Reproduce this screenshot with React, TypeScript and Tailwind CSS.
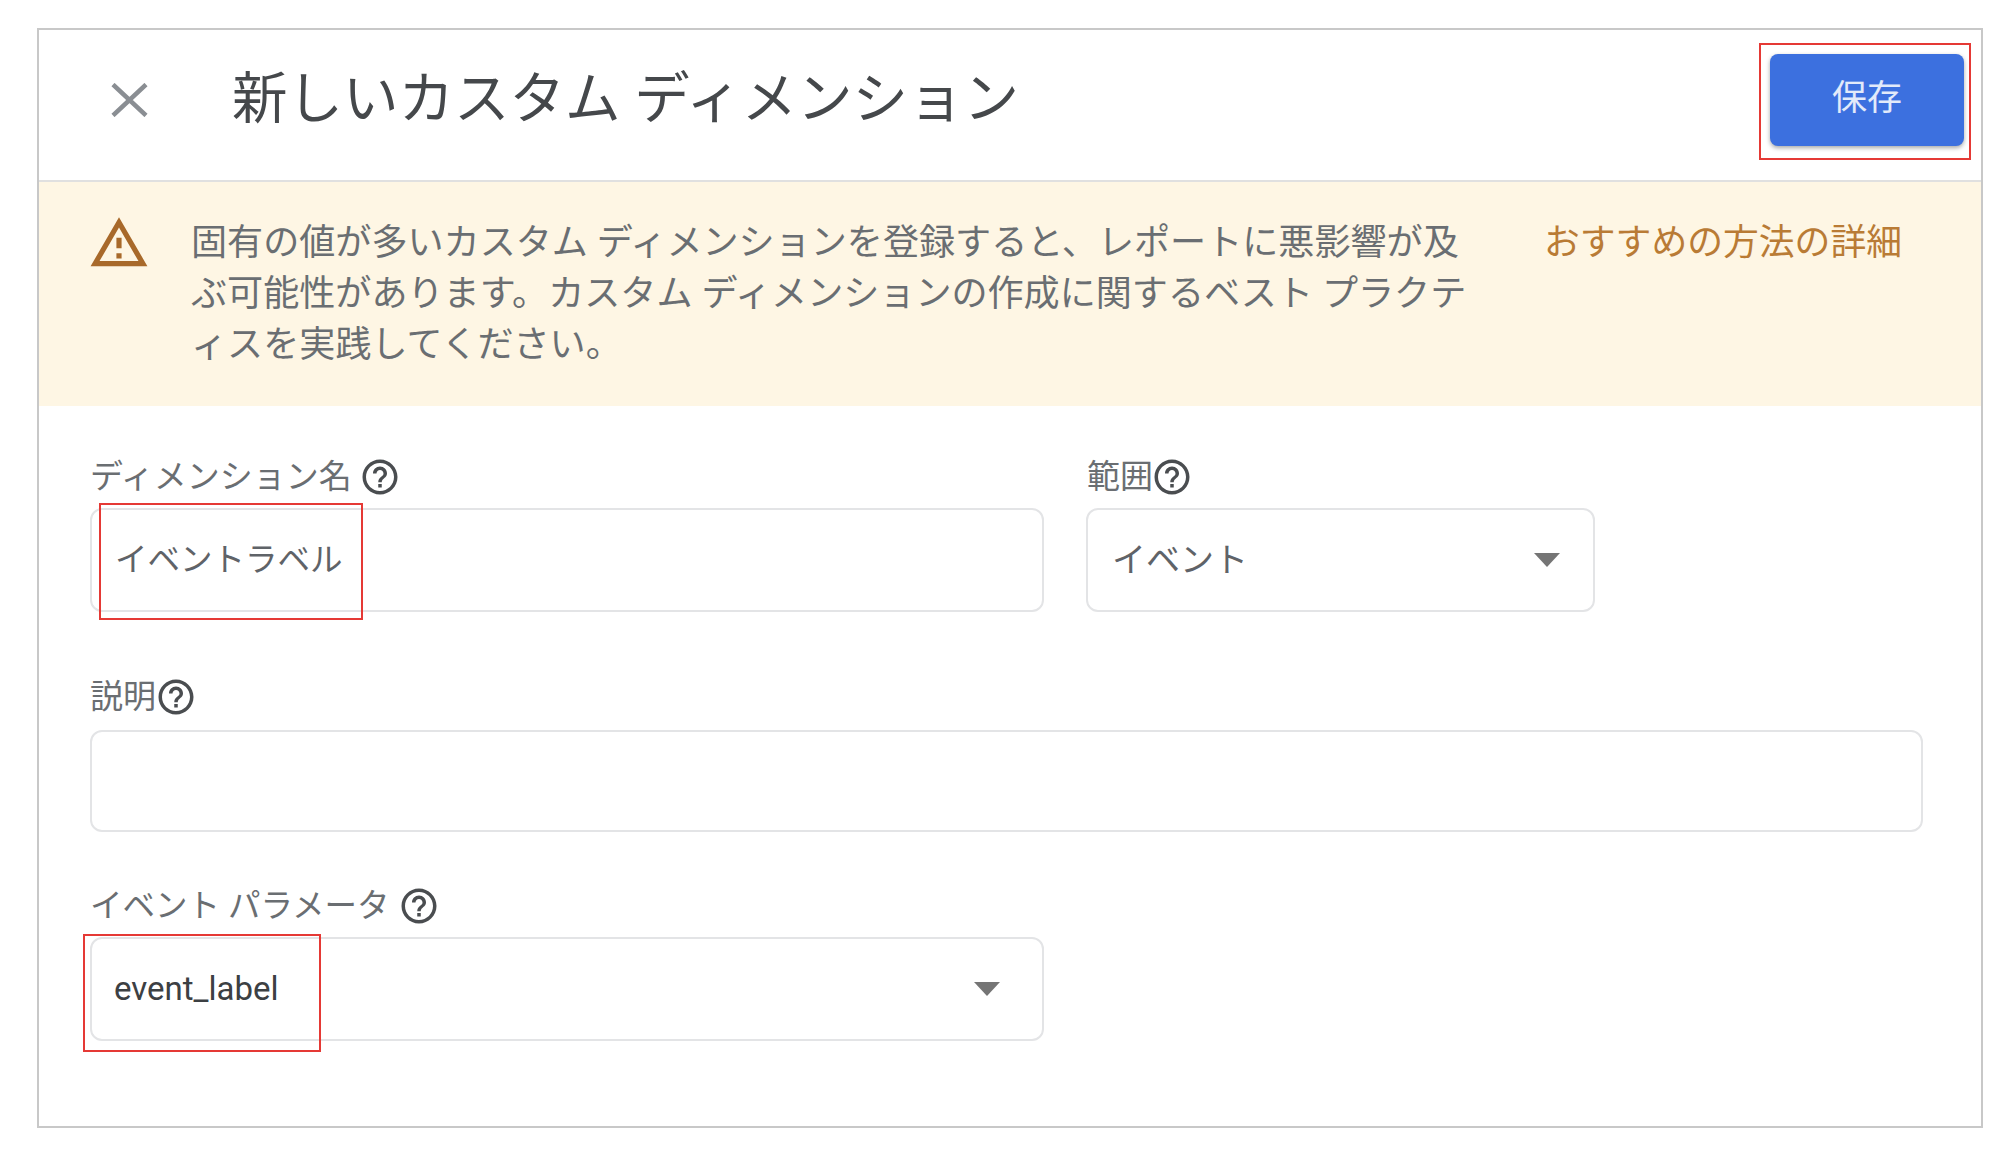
const FONT = "font-['Roboto','Noto_Sans_CJK_JP',sans-serif]"

function HelpIcon({ className = "" }: { className?: string }) {
  return (
    <svg viewBox="0 0 24 24" className={`h-[42px] w-[42px] shrink-0 fill-[#4a4d50] ${className}`}>
      <path d="M11 18h2v-2h-2v2zm1-16C6.48 2 2 6.48 2 12s4.48 10 10 10 10-4.48 10-10S17.52 2 12 2zm0 18c-4.41 0-8-3.59-8-8s3.59-8 8-8 8 3.59 8 8-3.59 8-8 8zm0-14c-2.21 0-4 1.79-4 4h2c0-1.1.9-2 2-2s2 .9 2 2c0 2-3 1.75-3 5h2c0-2.25 3-2.5 3-5 0-2.21-1.79-4-4-4z" />
    </svg>
  )
}

function Caret() {
  return (
    <svg viewBox="0 0 26 14" className="h-[14px] w-[26px] shrink-0 fill-[#757575]">
      <path d="M0 0h26L13 14z" />
    </svg>
  )
}

function Label({ text, iconClass, size = "text-[33px]" }: { text: string; iconClass: string; size?: string }) {
  return (
    <div className={`flex h-10 items-center leading-10 whitespace-nowrap text-[#6a6e72] ${size}`}>
      <span>{text}</span>
      <HelpIcon className={iconClass} />
    </div>
  )
}

export default function App() {
  return (
    <div className={`h-[1170px] w-[2014px] overflow-hidden bg-white pl-[37px] pt-[28px] ${FONT}`}>
      <div className="h-[1100px] w-[1946px] border-2 border-[#c8c8c8]">
        {/* Header */}
        <div className="flex h-[152px] items-center border-b-2 border-[#e0e0e0] pl-[72px] pr-[17px]">
          <svg viewBox="0 0 37 34" className="mt-[-10px] h-[34px] w-[37px] shrink-0 stroke-[#8a8e93] stroke-[4.5]" fill="none">
            <path d="M2 1.5L35 32.5M35 1.5L2 32.5" />
          </svg>
          <h1 className="ml-[84px] mt-[-11px] text-[55.5px] font-normal leading-[64px] whitespace-nowrap text-[#45484b]">
            新しいカスタム ディメンション
          </h1>
          <div className="relative ml-auto mt-[-11px]">
            <button className="block h-[92px] w-[194px] rounded-[8px] bg-[#3c70df] text-[35px] text-white/85 shadow-[0_2px_4px_rgba(60,64,67,0.45)]">
              保存
            </button>
            <div className="absolute -left-[11px] -top-[11px] h-[117px] w-[212px] border-2 border-[#e53935]" />
          </div>
        </div>

        {/* Warning banner */}
        <div className="flex h-[224px] bg-[#fef6e4] pl-[49px] pt-[30px]">
          <svg viewBox="0 0 24 24" className="h-[62px] w-[62px] shrink-0 fill-[#a8692a]">
            <path d="M12 5.99L19.53 19H4.47L12 5.99M12 2L1 21h22L12 2zm1 14h-2v2h2v-2zm0-6h-2v4h2v-4z" />
          </svg>
          <p className="ml-[41px] mt-[6px] w-[1353px] shrink-0 text-[36.1px] leading-[51px] whitespace-nowrap text-[#6a6e72]">
            固有の値が多いカスタム ディメンションを登録すると、レポートに悪影響が及
            <br />
            ぶ可能性があります。カスタム ディメンションの作成に関するベスト プラクテ
            <br />
            ィスを実践してください。
          </p>
          <a className="mt-[6px] text-[35.8px] leading-[51px] whitespace-nowrap text-[#b97b35]">おすすめの方法の詳細</a>
        </div>

        {/* Form */}
        <div className="pl-[51px] pr-[58px] pt-[51px]">
          <div className="flex gap-[43px]">
            <div className="w-[954px]">
              <Label text="ディメンション名" iconClass="ml-[7px]" />
              <div className="relative mt-[11px] flex h-[104px] items-center rounded-[12px] border-2 border-[#e3e4e6] pl-[23px] text-[32.5px] text-[#5f6368]">
                イベントラベル
                <div className="absolute -top-[7px] left-[7px] h-[117px] w-[264px] border-2 border-[#e53935]" />
              </div>
            </div>
            <div className="w-[508px]">
              <Label text="範囲" iconClass="-ml-[2px]" />
              <div className="-ml-px mt-[11px] flex h-[104px] items-center justify-between rounded-[12px] border-2 border-[#e3e4e6] pl-[24px] pr-[33px] text-[34px] text-[#5f6368]">
                <span>イベント</span>
                <Caret />
              </div>
            </div>
          </div>

          <div className="mt-[65px]">
            <Label text="説明" iconClass="-ml-[1px]" />
            <div className="mt-[13px] h-[102px] rounded-[12px] border-2 border-[#e3e4e6]" />
          </div>

          <div className="mt-[54px] w-[954px]">
            <Label text="イベント パラメータ" iconClass="ml-[8px]" size="text-[32.5px]" />
            <div className="relative mt-[11px] flex h-[104px] items-center justify-between rounded-[12px] border-2 border-[#e3e4e6] pl-[22px] pr-[42px] text-[33px] text-[#3c4043]">
              <span>event_label</span>
              <Caret />
              <div className="absolute -left-[9px] -top-[5px] h-[118px] w-[238px] border-2 border-[#e53935]" />
            </div>
          </div>
        </div>
      </div>
    </div>
  )
}
